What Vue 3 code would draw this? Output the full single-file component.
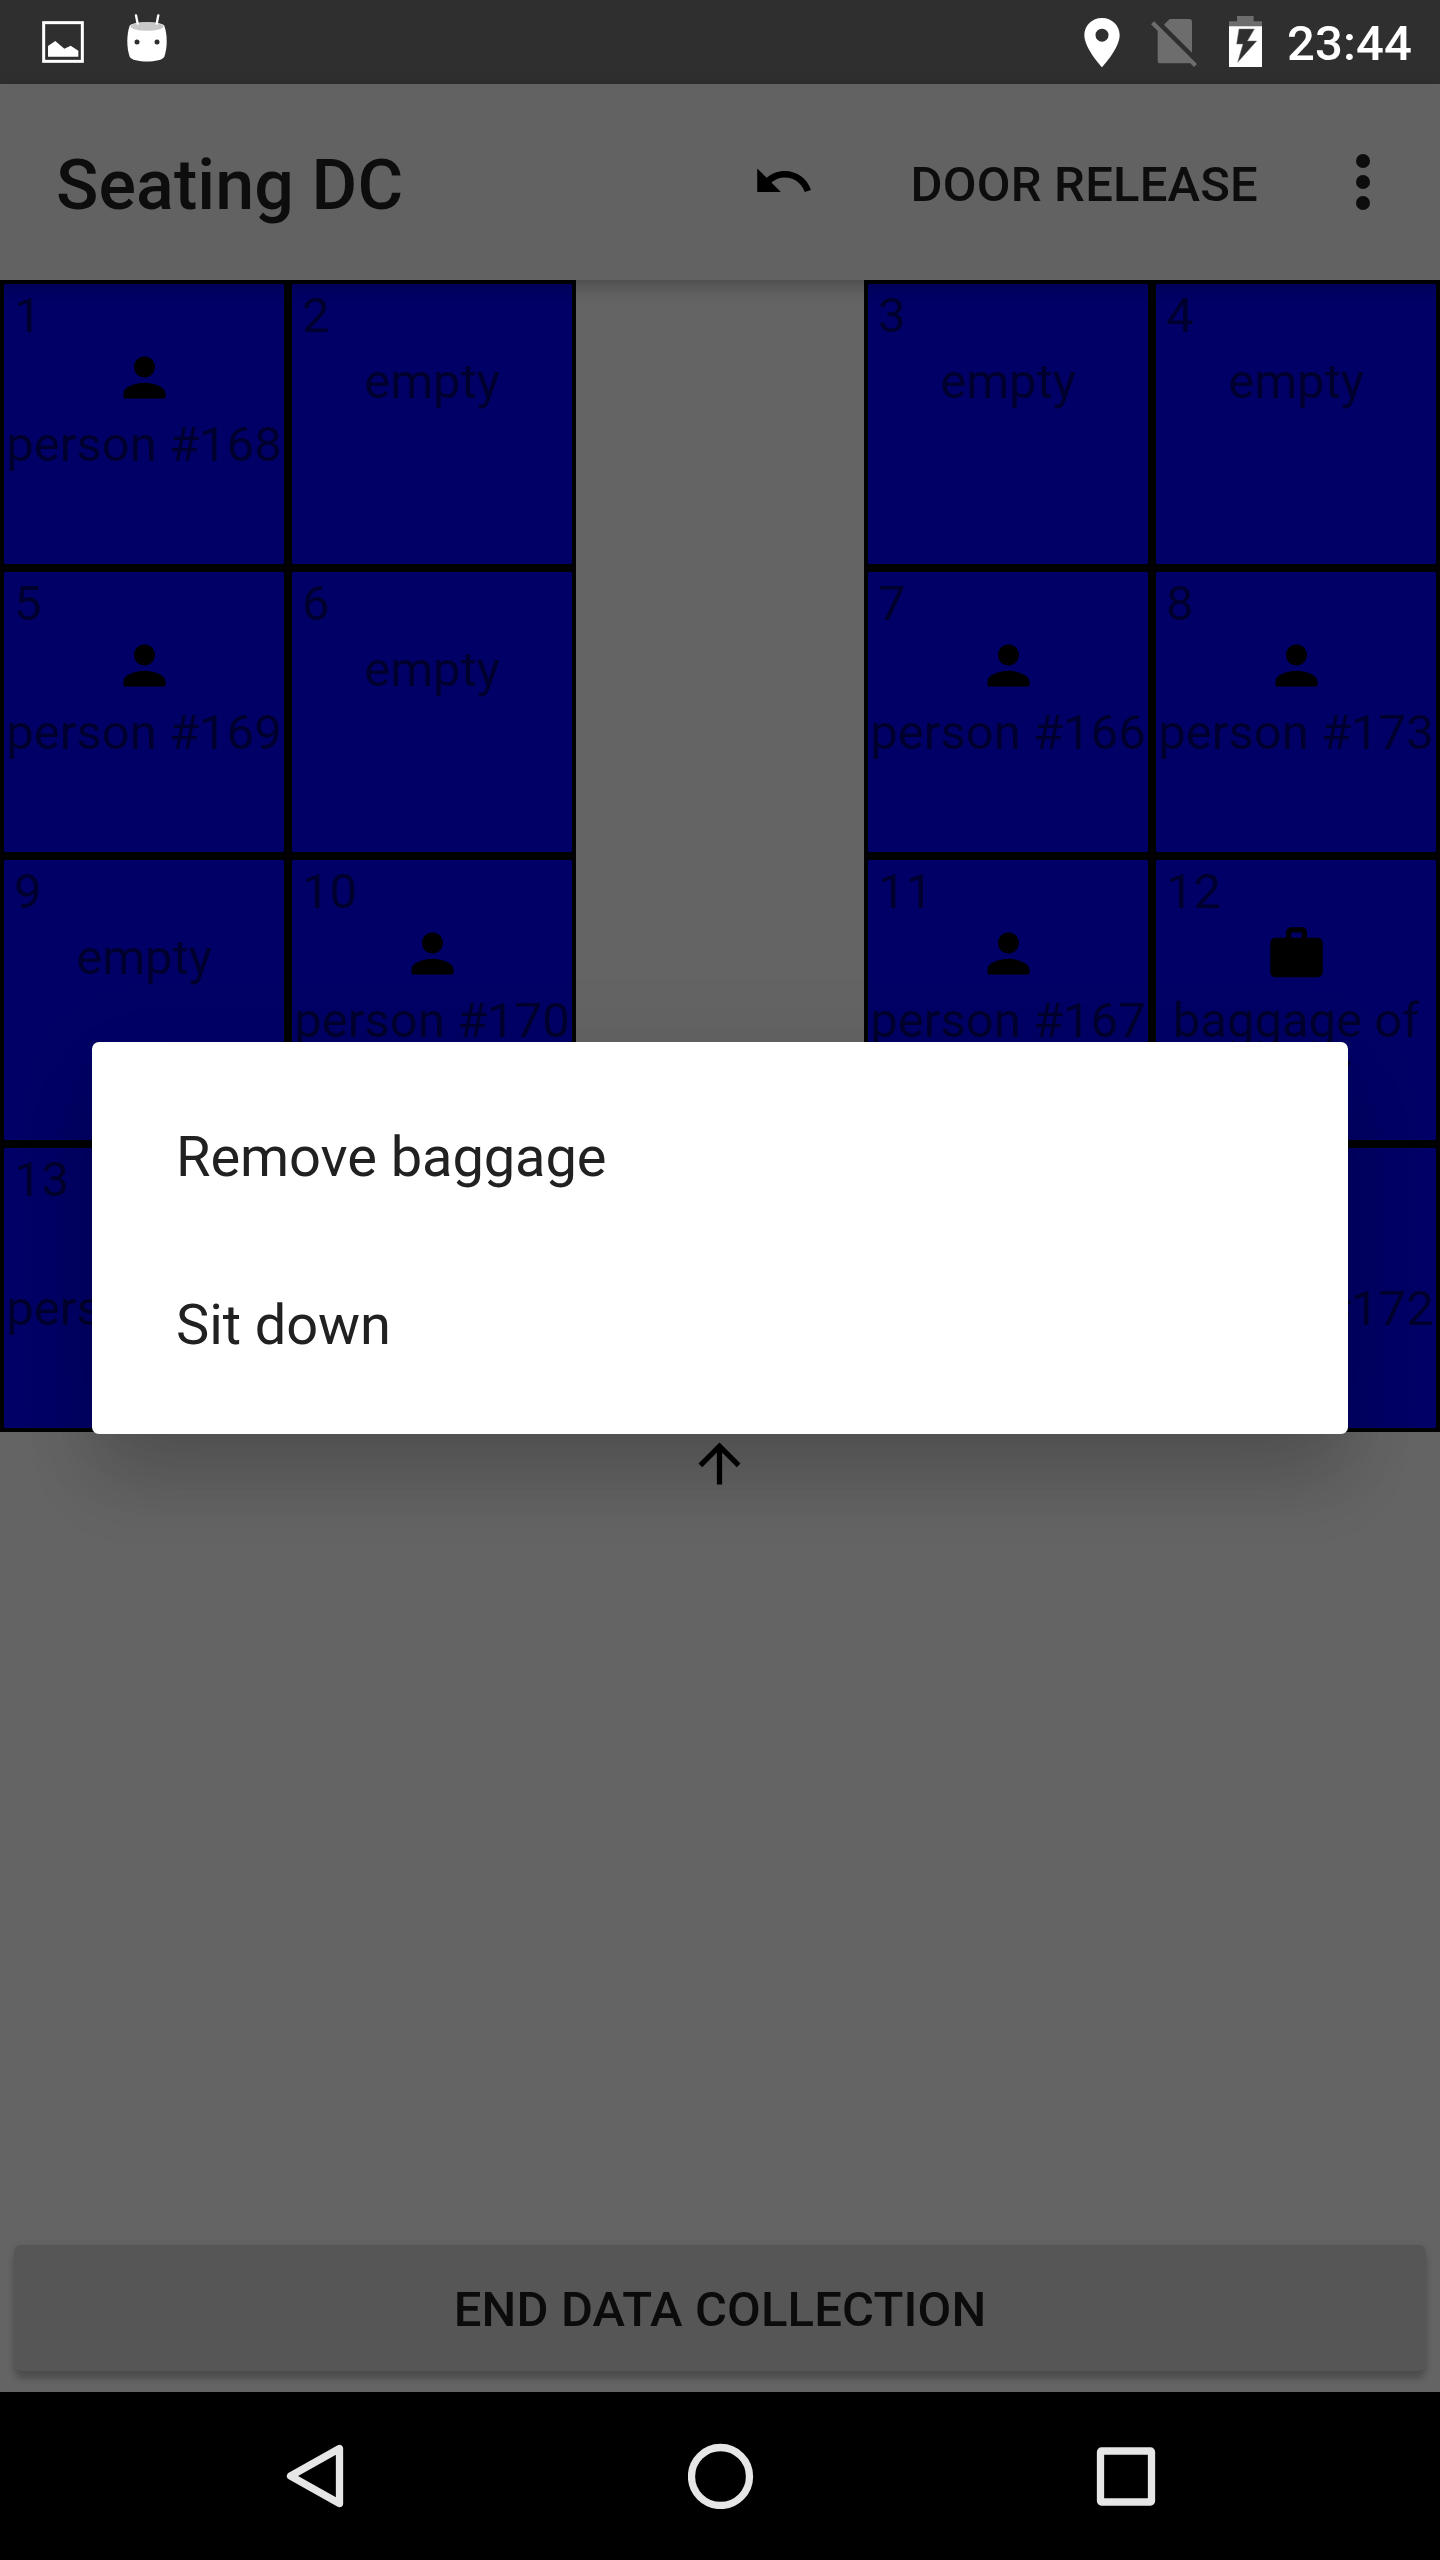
<script setup>
const seat = (number, kind, ...lines) => ({ number, kind, lines })

const rows = [
  [seat(1, 'person', 'person #168'), seat(2, 'empty', 'empty'), null, seat(3, 'empty', 'empty'), seat(4, 'empty', 'empty')],
  [seat(5, 'person', 'person #169'), seat(6, 'empty', 'empty'), null, seat(7, 'person', 'person #166'), seat(8, 'person', 'person #173')],
  [seat(9, 'empty', 'empty'), seat(10, 'person', 'person #170'), null, seat(11, 'person', 'person #167'), seat(12, 'baggage', 'baggage of', '#167')],
  [seat(13, 'person', 'person #171'), seat(14, 'empty'), null, seat(15, 'empty'), seat(16, 'person', 'person #172')],
]

const actions = ['Remove baggage', 'Sit down']

const icons = {
  person: 'M12 12c2.21 0 4-1.79 4-4s-1.79-4-4-4-4 1.79-4 4 1.79 4 4 4zm0 2c-2.67 0-8 1.34-8 4v2h16v-2c0-2.66-5.33-4-8-4z',
  baggage: 'M20 6h-4V4c0-1.11-.89-2-2-2h-4c-1.11 0-2 .89-2 2v2H4c-1.11 0-1.99.89-1.99 2L2 19c0 1.11.89 2 2 2h16c1.11 0 2-.89 2-2V8c0-1.11-.89-2-2-2zm-6 0h-4V4h4v2z',
}
</script>

<template>
  <div class="screen">
    <header class="status">
      <svg class="st-image" width="42" height="42" viewBox="0 0 126 126">
        <rect x="5" y="5" width="116" height="116" fill="none" stroke="#fff" stroke-width="9" />
        <path d="M18 75L40 60 67 83 86 74 109 89V107H18z" fill="#fff" />
      </svg>
      <svg class="st-debug" width="40" height="48" viewBox="0 0 120 144">
        <path d="M8 35C14 22 106 22 112 35C121 60 122 100 112 128C104 147 16 147 8 128C-2 100-1 60 8 35z" fill="#fff" />
        <ellipse cx="60" cy="37" rx="50" ry="13" fill="#c8c8c8" />
        <circle cx="30" cy="84" r="7.5" fill="#2f2f2f" />
        <circle cx="90" cy="84" r="7.5" fill="#2f2f2f" />
        <path d="M27 4L32 29M94 4L89 29" stroke="#fff" stroke-width="7" stroke-linecap="round" />
      </svg>
      <span class="grow"></span>
      <svg class="st-pin" width="36" height="50" viewBox="0 0 108 150">
        <path fill-rule="evenodd" d="M54 0C24 0 1 23 1 52C1 91 54 148 54 148S107 91 107 52C107 23 84 0 54 0zM54 32a19.500 19.500 0 1 1 0 39a19.500 19.500 0 0 1 0-39z" fill="#fff" />
      </svg>
      <svg class="st-sim" width="46" height="50" viewBox="0 0 138 150">
        <path d="M39 23L56 6H115Q123 6 123 14V107zM20 32L109 121L122 136Q120 139 114 139H28Q20 139 20 131z" fill="#6d6d6d" />
        <path d="M0 22L9 13L138 141L129 150z" fill="#6d6d6d" />
      </svg>
      <svg class="st-battery" width="33" height="51" viewBox="0 0 99 153">
        <path d="M0 32V16H24V0H74V16H99V32z" fill="#6d6d6d" />
        <path d="M0 31H99V153H0z" fill="#fff" />
        <path d="M30 39H76L55 75H83L26 139L42 84H23z" fill="#2f2f2f" stroke="#777" stroke-width="1.500" />
      </svg>
      <span class="clock">23:44</span>
    </header>

    <div class="appbar">
      <h1 class="title">Seating DC</h1>
      <svg class="undo" width="63" height="63" viewBox="0 0 24 24">
        <path d="M12.500 8c-2.650 0-5.050.99-6.900 2.600L2 7v9h9l-3.620-3.620c1.390-1.160 3.160-1.880 5.120-1.880 3.540 0 6.550 2.310 7.600 5.500l2.370-.78C21.080 11.030 17.150 8 12.500 8z" />
      </svg>
      <span class="release">DOOR RELEASE</span>
      <svg class="more" width="14" height="56" viewBox="0 0 14 56">
        <circle cx="7" cy="7" r="7" /><circle cx="7" cy="28" r="7" /><circle cx="7" cy="49" r="7" />
      </svg>
    </div>

    <main class="content">
      <div class="seats">
        <template v-for="(row, r) in rows" :key="r">
          <div v-for="(cell, c) in row" :key="c" :class="cell ? 'seat' : 'aisle'">
            <template v-if="cell">
              <div class="number">{{ cell.number }}</div>
              <svg v-if="icons[cell.kind]" class="glyph" width="63" height="63" viewBox="0 0 24 24">
                <path :d="icons[cell.kind]" />
              </svg>
              <div :class="['label', { bare: !icons[cell.kind] }]">
                <div v-for="line in cell.lines" :key="line">{{ line }}</div>
              </div>
            </template>
          </div>
        </template>
      </div>
      <svg class="arrow" width="63" height="63" viewBox="0 0 24 24">
        <path d="M4 12l1.410 1.410L11 7.830V20h2V7.830l5.580 5.590L20 12l-8-8-8 8z" />
      </svg>
      <span class="grow"></span>
      <button class="end">END DATA COLLECTION</button>
    </main>

    <nav class="navbar">
      <svg width="66" height="66" viewBox="0 0 66 66">
        <path d="M57.500 5.500V60.500L8.500 33z" />
      </svg>
      <svg width="66" height="66" viewBox="0 0 66 66">
        <circle cx="32.5" cy="33.5" r="29" />
      </svg>
      <svg width="66" height="66" viewBox="0 0 66 66">
        <rect x="7.500" y="8" width="51" height="51" rx="1" />
      </svg>
    </nav>

    <div class="dialog">
      <div v-for="action in actions" :key="action" class="action">{{ action }}</div>
    </div>
  </div>
</template>

<style>
body {
  margin: 0;
  background: #000;
}
</style>

<style scoped>
.screen {
  position: relative;
  display: flex;
  flex-direction: column;
  width: 1440px;
  height: 2560px;
  overflow: hidden;
  background: #646464;
  font-family: Roboto, "Noto Sans", sans-serif;
  font-size: 49px;
  line-height: 58px;
}
svg {
  display: block;
  flex: none;
}
.grow {
  flex: 1;
}
.status {
  display: flex;
  align-items: flex-start;
  flex: none;
  box-sizing: border-box;
  height: 84px;
  padding: 0 28px 0 42px;
  background: #2f2f2f;
}
.st-image {
  margin: 21px 43px 0 0;
}
.st-debug {
  margin-top: 14px;
}
.st-pin {
  margin: 18px 31px 0 0;
}
.st-sim {
  margin: 17px 32px 0 0;
}
.st-battery {
  margin: 16px 25px 0 0;
}
.clock {
  margin-top: 15px;
  color: #fff;
  font-weight: 500;
  letter-spacing: 0.15px;
}
.appbar {
  position: relative;
  z-index: 1;
  display: flex;
  align-items: flex-start;
  flex: none;
  box-sizing: border-box;
  height: 196px;
  padding: 0 70px 0 56px;
  background: #626262;
  color: #0d0d0d;
  font-weight: 500;
  box-shadow: 0 6px 16px rgba(0, 0, 0, 0.25);
}
.title {
  flex: 1;
  margin: 60px 0 0;
  font-size: 70px;
  font-weight: 500;
  line-height: 82px;
  letter-spacing: 0.1px;
}
.undo {
  margin: 66px 96px 0 0;
}
.release {
  margin: 72px 98px 0 0;
  letter-spacing: 0.2px;
}
.more {
  margin-top: 70px;
  fill: #0d0d0d;
}
.content {
  display: flex;
  flex-direction: column;
  align-items: center;
  flex: 1;
}
.seats {
  display: grid;
  grid-template-columns: repeat(5, 288px);
  grid-auto-rows: 288px;
}
.seat {
  display: flex;
  flex-direction: column;
  align-items: center;
  box-sizing: border-box;
  padding-top: 6px;
  border: 1px solid #030303;
  background: #000066;
  box-shadow: inset 0 0 0 3px #000;
  color: #00002e;
  text-align: center;
  white-space: nowrap;
}
.number {
  align-self: flex-start;
  height: 59px;
  padding-left: 13px;
}
.glyph {
  margin-bottom: 7px;
}
.bare {
  margin-top: 7px;
}
.arrow {
  margin-right: 1px;
}
.end {
  width: 1412px;
  height: 126px;
  margin: 0 14px 21px;
  padding: 4px 0 0;
  border: 0;
  border-radius: 7px;
  background: #565656;
  color: #0b0b0b;
  font: 500 49px/58px Roboto, "Noto Sans", sans-serif;
  letter-spacing: 0.15px;
  box-shadow: 0 9px 6px -1px rgba(0, 0, 0, 0.18), 0 2px 8px rgba(0, 0, 0, 0.12);
}
.navbar {
  display: flex;
  justify-content: space-between;
  align-items: center;
  flex: none;
  box-sizing: border-box;
  height: 168px;
  padding: 0 281px 0 282px;
  background: #000;
}
.navbar svg {
  fill: none;
  stroke: #e6e6e6;
  stroke-width: 7.3;
  stroke-linejoin: round;
}
.dialog {
  position: absolute;
  z-index: 2;
  top: 1042px;
  left: 92px;
  box-sizing: border-box;
  width: 1256px;
  padding: 28px 0;
  border-radius: 7px;
  background: #fff;
  color: #212121;
  font-size: 56px;
  box-shadow: 0 50px 70px -4px rgba(0, 0, 0, 0.16), 0 10px 90px rgba(0, 0, 0, 0.08);
}
.action {
  height: 168px;
  padding-left: 84px;
  line-height: 174px;
  letter-spacing: -0.08px;
}
</style>
